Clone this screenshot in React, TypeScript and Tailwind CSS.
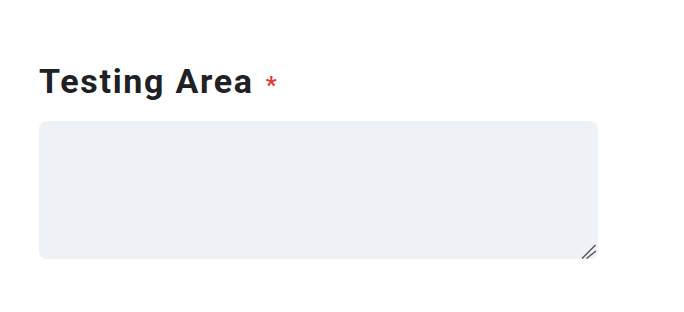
export default function App() {
  return (
    <div className="min-h-[312px] w-[684px] bg-white pt-[60px] pl-[39px]" style={{ fontFamily: 'Roboto, "Noto Sans", sans-serif' }}>
      <label className="flex h-[42px] items-baseline gap-[12px] text-[34px] font-bold leading-[42px] tracking-[0.05em] text-[#202124]">
        <span>Testing Area</span>
        <span className="text-[24px] leading-[24px] text-[#e53935]">*</span>
      </label>
      <div className="relative mt-[19px] h-[138px] w-[559px]">
        <textarea className="block h-full w-full resize-none rounded-[8px] bg-[#eef2f6] outline-none" />
        <svg className="pointer-events-none absolute left-[542px] top-[121px]" width="17" height="17" viewBox="0 0 17 17">
          <line x1="1" y1="16.5" x2="14.5" y2="3" stroke="#555" strokeWidth="1.4" />
          <line x1="5.5" y1="16.5" x2="15" y2="9" stroke="#555" strokeWidth="1.4" />
        </svg>
      </div>
    </div>
  );
}
